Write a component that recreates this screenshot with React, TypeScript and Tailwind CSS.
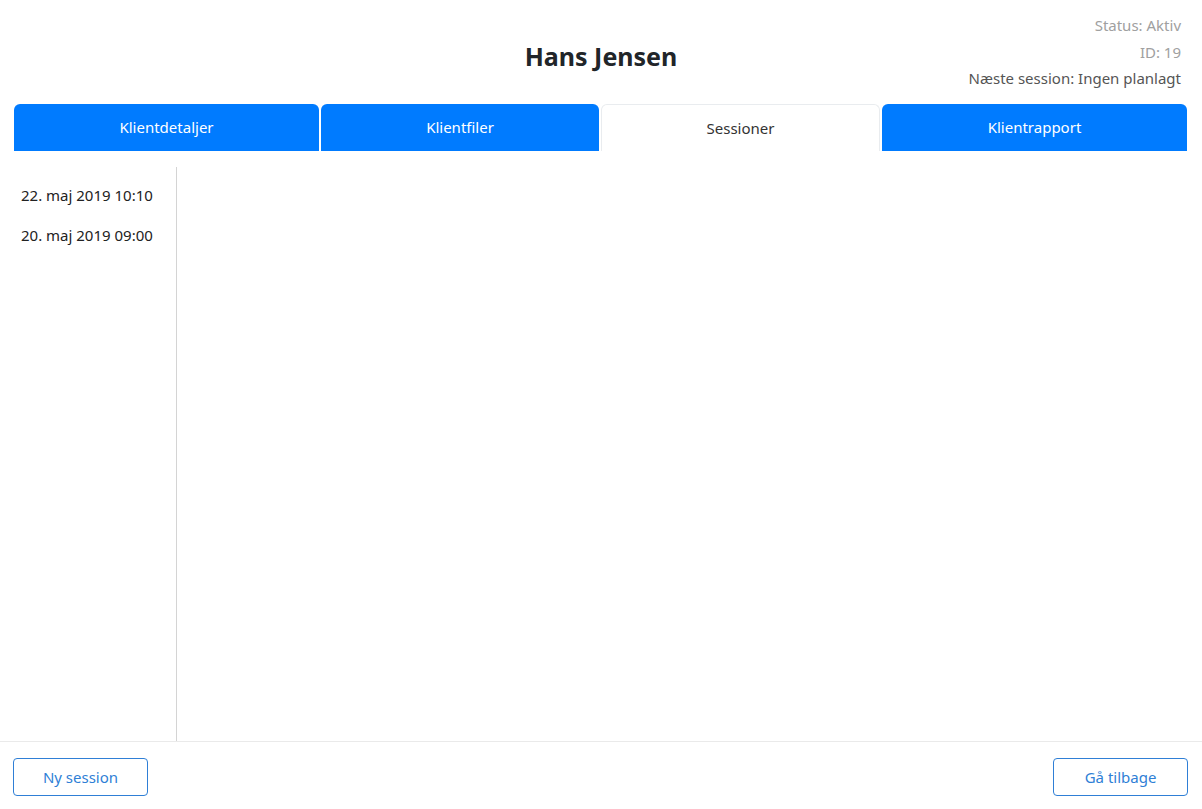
const tabs = [
  { label: 'Klientdetaljer', w: 'w-[305px]' },
  { label: 'Klientfiler', w: 'w-[278px]' },
  { label: 'Sessioner', w: 'w-[279px]', active: true },
  { label: 'Klientrapport', w: 'w-[305px]' },
];

const sessions = ['22. maj 2019 10:10', '20. maj 2019 09:00'];

export default function App() {
  return (
    <div className="flex h-[809px] flex-col bg-white font-['Segoe_UI','Noto_Sans',sans-serif] text-[#212529]">
      <header className="relative h-[104px]">
        <h1 className="pt-[39px] text-center text-[25px] leading-[34px] font-bold text-[#212529]">Hans Jensen</h1>
        <div className="absolute top-[12px] right-[21px] text-right text-[15px] leading-[26.5px]">
          <div className="text-[#a0a0a0]">Status: Aktiv</div>
          <div className="text-[#a0a0a0]">ID: 19</div>
          <div className="text-[#555]">Næste session: Ingen planlagt</div>
        </div>
      </header>

      <nav className="flex gap-[2px] px-[14px]">
        {tabs.map((t) =>
          t.active ? (
            <div
              key={t.label}
              className={`${t.w} flex h-[47px] items-center justify-center rounded-t-[6px] border border-b-0 border-[#e9ecef] bg-white text-[15px] text-[#333]`}
            >
              {t.label}
            </div>
          ) : (
            <div
              key={t.label}
              className={`${t.w} flex h-[47px] items-center justify-center rounded-t-[6px] bg-[#007bff] text-[15px] text-white`}
            >
              {t.label}
            </div>
          ),
        )}
      </nav>

      <main className="flex flex-1 pt-[16px]">
        <aside className="w-[177px] border-r border-[#d4d4d4] pt-[17px] pl-[21px]">
          {sessions.map((s) => (
            <div key={s} className="h-[40px] text-[15px] leading-[22px] text-[#222]">
              {s}
            </div>
          ))}
        </aside>
        <section className="flex-1" />
      </main>

      <footer className="flex h-[68px] items-center justify-between border-t border-[#eaeaea] pt-[3px] pr-[14px] pl-[13px]">
        <button className="h-[38px] w-[135px] rounded-[4px] border border-[#2f7fd6] text-[15px] text-[#2f7fd6]">
          Ny session
        </button>
        <button className="h-[38px] w-[135px] rounded-[4px] border border-[#2f7fd6] text-[15px] text-[#2f7fd6]">
          Gå tilbage
        </button>
      </footer>
    </div>
  );
}
